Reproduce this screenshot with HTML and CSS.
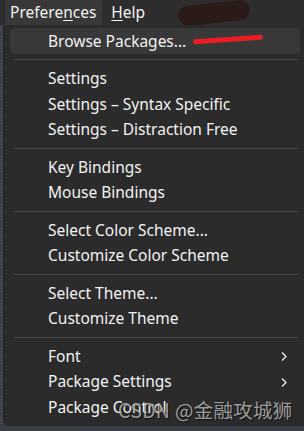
FILE: index.html
```html
<!DOCTYPE html>
<html>

<head>
  <meta charset="utf-8">
  <title>Preferences</title>
  <link rel="stylesheet" href="styles.css">
</head>

<body>
  <div class="menubar">
    <span class="top active">Prefere<u>n</u>ces</span>
    <span class="top"><u>H</u>elp</span>
    <span class="blot"></span>
  </div>
  <div class="main">
    <div class="gutter"></div>
    <div class="menu">
      <div class="item hover">Browse Packages...<span class="mark"></span></div>
      <div class="sep"></div>
      <div class="item">Settings</div>
      <div class="item">Settings – Syntax Specific</div>
      <div class="item">Settings – Distraction Free</div>
      <div class="sep"></div>
      <div class="item">Key Bindings</div>
      <div class="item">Mouse Bindings</div>
      <div class="sep"></div>
      <div class="item">Select Color Scheme...</div>
      <div class="item">Customize Color Scheme</div>
      <div class="sep"></div>
      <div class="item">Select Theme...</div>
      <div class="item">Customize Theme</div>
      <div class="sep"></div>
      <div class="item sub">Font
        <svg class="chev" width="6" height="9" viewBox="0 0 6 9"><path d="M1 0.5 L5 4.5 L1 8.5" fill="none" stroke="#f0f0f0" stroke-width="1.3"/></svg>
      </div>
      <div class="item sub">Package Settings
        <svg class="chev" width="6" height="9" viewBox="0 0 6 9"><path d="M1 0.5 L5 4.5 L1 8.5" fill="none" stroke="#f0f0f0" stroke-width="1.3"/></svg>
      </div>
      <div class="item">Package Control</div>
    </div>
  </div>
  <div class="watermark">CSDN @金融攻城狮</div>
</body>

</html>
```

FILE: styles.css
```css
* {
  margin: 0;
  box-sizing: border-box;
}

body {
  width: 304px;
  height: 431px;
  overflow: hidden;
  position: relative;
  background: #3a3f46;
  font-family: "Noto Sans", "Open Sans", sans-serif;
  font-size: 15.5px;
  color: #f2f2f2;
}

/* 顶部菜单栏 */
.menubar {
  height: 25px;
  display: flex;
  align-items: stretch;
  background: #2d2d2d;
  padding-left: 5px;
  position: relative;
}

.top {
  display: flex;
  align-items: center;
  padding: 0 6px 0 5px;
  line-height: 1;
}

.top.active {
  background: #383838;
  padding-right: 6px;
}

.top + .top {
  padding-left: 9px;
}

.top u {
  text-underline-offset: 2px;
}

.blot {
  position: absolute;
  left: 178px;
  top: 3px;
  width: 72px;
  height: 20px;
  border-radius: 10px;
  background: #2a1b19;
  transform: rotate(-6deg);
}

/* 下拉菜单 */
.main {
  display: flex;
  height: 401px;
}

.gutter {
  width: 4px;
  background: repeating-linear-gradient(0deg, #3a3f46 0 2px, #4a4f57 2px 3px);
}

.menu {
  flex: 1;
  background: #2b2b2b;
  border-bottom-left-radius: 6px;
  padding: 3px 4px 0 6px;
  box-shadow: -1px 0 0 #232323;
}

.item {
  height: 25.5px;
  display: flex;
  align-items: center;
  padding-left: 38px;
  position: relative;
  white-space: nowrap;
}

.item.hover {
  background: #383838;
  border-radius: 5px;
}

.mark {
  position: absolute;
  left: 183px;
  top: 9px;
  width: 70px;
  height: 5px;
  border-radius: 3px;
  background: #ec1c24;
  transform: rotate(-4deg);
}

.sep {
  height: 12px;
  margin: 0 2px 0 4px;
  background: linear-gradient(#444 0 0) center / 100% 1px no-repeat;
}

.chev {
  position: absolute;
  right: 13px;
  top: 9px;
}

.watermark {
  position: absolute;
  left: 118px;
  top: 395px;
  font-family: "Noto Sans CJK SC", sans-serif;
  font-size: 19.5px;
  color: rgba(190, 190, 190, 0.8);
  text-shadow: 1px 1px 1px rgba(0, 0, 0, 0.6);
  letter-spacing: 0.3px;
}
```
